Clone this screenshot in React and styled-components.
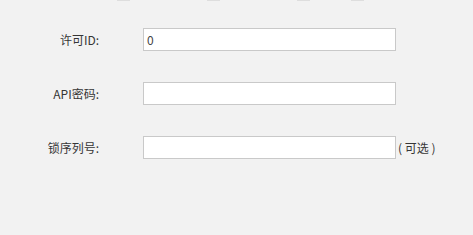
import React from "react";
import styled, { createGlobalStyle } from "styled-components";

const Global = createGlobalStyle`
  html, body { margin: 0; padding: 0; background: #f2f2f2; }
  body { font-family: "Noto Sans CJK SC", "Noto Sans", sans-serif; }
`;

const Page = styled.div`
  width: 473px;
  height: 235px;
  background: #f2f2f2;
  overflow: hidden;
`;

const TopStrip = styled.div`
  height: 1px;
  position: relative;
  overflow: hidden;
`;

const StripMark = styled.span`
  position: absolute;
  top: 0;
  left: ${(p) => p.$x}px;
  width: 13px;
  height: 1px;
  background: #dedede;
`;

const Form = styled.div`
  display: grid;
  grid-template-columns: 99px 253px auto;
  column-gap: 44px;
  row-gap: 31px;
  align-items: center;
  padding-top: 27px;
`;

const Label = styled.label`
  justify-self: end;
  font-size: 12px;
  color: #363636;
  line-height: 23px;
  white-space: nowrap;
`;

const FieldWrap = styled.div`
  display: flex;
  align-items: center;
  grid-column: 2 / span 2;
`;

const Input = styled.input`
  box-sizing: border-box;
  width: 253px;
  height: 23px;
  border: 1px solid #c9c9c9;
  background: #fff;
  padding: 0 3px;
  font-family: "Noto Sans CJK SC", "Noto Sans", sans-serif;
  font-size: 12px;
  color: #444;
  outline: none;
  flex: none;
`;

const Hint = styled.span`
  margin-left: 2px;
  font-size: 12px;
  color: #363636;
  white-space: pre;
`;

export default function App() {
  return (
    <Page>
      <Global />
      <TopStrip>
        {[117, 207, 297, 351].map((x) => (
          <StripMark key={x} $x={x} />
        ))}
      </TopStrip>
      <Form>
        <Label>许可ID:</Label>
        <FieldWrap>
          <Input defaultValue="0" />
        </FieldWrap>
        <Label>API密码:</Label>
        <FieldWrap>
          <Input defaultValue="" />
        </FieldWrap>
        <Label>锁序列号:</Label>
        <FieldWrap>
          <Input defaultValue="" />
          <Hint>( 可选 )</Hint>
        </FieldWrap>
      </Form>
    </Page>
  );
}
